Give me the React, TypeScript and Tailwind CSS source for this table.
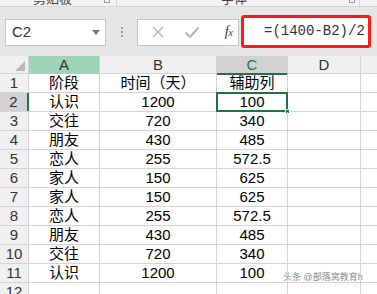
import React from "react"

const rows: [string, string, string][] = [
  ["阶段", "时间（天）", "辅助列"],
  ["认识", "1200", "100"],
  ["交往", "720", "340"],
  ["朋友", "430", "485"],
  ["恋人", "255", "572.5"],
  ["家人", "150", "625"],
  ["家人", "150", "625"],
  ["恋人", "255", "572.5"],
  ["朋友", "430", "485"],
  ["交往", "720", "340"],
  ["认识", "1200", "100"],
  ["", "", ""],
]

const cols = "grid grid-cols-[29px_71px_117px_71px_73px_1fr]"

export default function App() {
  return (
    <div className="relative w-[377px] h-[294px] overflow-hidden bg-white text-black font-['Liberation_Sans','Noto_Sans_CJK_SC',sans-serif]">
      {/* ribbon bottom edge */}
      <div className="h-[7px] bg-[#f3f3f3] border-b border-[#d6d6d6] overflow-hidden flex text-[13px] text-[#444] leading-none">
        <div className="w-[117px] shrink-0 border-r border-[#d6d6d6] flex justify-between pr-[6px]">
          <span className="ml-[33px] -mt-[8px]">剪贴板</span>
          <span className="-mt-[3px] w-[6px] h-[6px] border border-[#999]" />
        </div>
        <div className="w-[243px] shrink-0 border-r border-[#d6d6d6] flex justify-between pr-[4px]">
          <span className="ml-[104px] -mt-[8px]">字体</span>
          <span className="-mt-[3px] w-[6px] h-[6px] border border-[#999]" />
        </div>
      </div>

      {/* formula bar */}
      <div className="h-[49px] bg-[#e6e6e6] flex items-center pl-[5px]">
        <div className="w-[101px] shrink-0 h-[27px] mt-[1px] bg-white border border-[#c6c6c6] flex items-center justify-between pl-[6px] pr-[5px]">
          <span className="text-[15px] text-[#333]">C2</span>
          <span className="w-0 h-0 border-l-[4px] border-r-[4px] border-t-[5px] border-l-transparent border-r-transparent border-t-[#777]" />
        </div>
        <div className="w-[31px] shrink-0 flex flex-col items-center gap-[2px]">
          <span className="w-[2px] h-[2px] bg-[#a0a0a0]" />
          <span className="w-[2px] h-[2px] bg-[#a0a0a0]" />
          <span className="w-[2px] h-[2px] bg-[#a0a0a0]" />
        </div>
        <div className="w-[102px] shrink-0 h-[27px] mt-[1px] bg-white border border-[#c6c6c6] flex items-center pl-[13px] pr-[5px]">
          <svg width="14" height="14" viewBox="0 0 14 14" className="mr-[19px]">
            <path d="M2 2 L12 12 M12 2 L2 12" stroke="#b4b4b4" strokeWidth="1.4" />
          </svg>
          <svg width="16" height="14" viewBox="0 0 16 14">
            <path d="M1.5 7.5 L6 12 L14.5 2.5" stroke="#b4b4b4" strokeWidth="2" fill="none" />
          </svg>
          <span className="ml-auto text-[14px] italic font-['Liberation_Serif',serif] text-[#333] leading-none">
            f<span className="text-[10px]">x</span>
          </span>
        </div>
        <div className="w-[2px] shrink-0" />
        <div className="w-[130px] shrink-0 h-[33px] mt-[-1px] border-[3px] border-[#ff1a1a] rounded-[3px] bg-white flex items-center pl-[20px]">
          <span className="text-[14px] text-[#333] font-['Liberation_Mono',monospace]">=(1400-B2)/2</span>
        </div>
      </div>

      {/* column headers */}
      <div className={`${cols} h-[18px] bg-[#f0f0f0] border-b border-[#d4d4d4] text-[15px] leading-[17px] text-[#333]`}>
        <div className="border-r border-[#d4d4d4] relative">
          <span className="absolute right-[3px] bottom-[3px] w-0 h-0 border-l-[10px] border-b-[10px] border-l-transparent border-b-[#b8b8b8]" />
        </div>
        <div className="border-r border-[#d4d4d4] bg-[#9fd5b7] text-center">A</div>
        <div className="border-r border-[#d4d4d4] text-center">B</div>
        <div className="border-r border-[#d4d4d4] bg-[#d2d2d2] text-center text-[#217346] border-b-2 border-b-[#217346] -mb-[1px]">C</div>
        <div className="border-r border-[#d4d4d4] text-center">D</div>
        <div />
      </div>

      {/* rows */}
      {rows.map((r, i) => {
        const n = i + 1
        const sel = n === 2
        return (
          <div key={n} className={`${cols} h-[19px] border-b border-[#d4d4d4] leading-[18px]`}>
            <div
              className={`text-[15px] text-center text-[#333] ${
                sel ? "bg-[#d2d2d2] border-r-2 border-[#217346]" : "bg-[#f0f0f0] border-r border-[#d4d4d4]"
              }`}
            >
              {n}
            </div>
            <div className="border-r border-[#d4d4d4] text-center text-[15px]">{r[0]}</div>
            <div className="border-r border-[#d4d4d4] text-center text-[15px]">{r[1]}</div>
            <div className="relative border-r border-[#d4d4d4] text-center text-[15px]">
              {r[2]}
              {sel && (
                <div className="absolute -left-[1px] -top-[1px] -right-[1px] -bottom-[1px] border-2 border-[#217346]">
                  <span className="absolute -right-[4px] -bottom-[4px] w-[5px] h-[5px] bg-[#217346] border border-white" />
                </div>
              )}
            </div>
            <div className="border-r border-[#d4d4d4]" />
            <div />
          </div>
        )
      })}

      {/* watermark */}
      <div
        className="absolute left-[283px] top-[273px] text-[9px] leading-none text-[#8a8a8a] whitespace-nowrap"
        style={{ textShadow: "0 0 2px #fff, 0 0 2px #fff" }}
      >
        头条 @部落窝教育h
      </div>
    </div>
  )
}
